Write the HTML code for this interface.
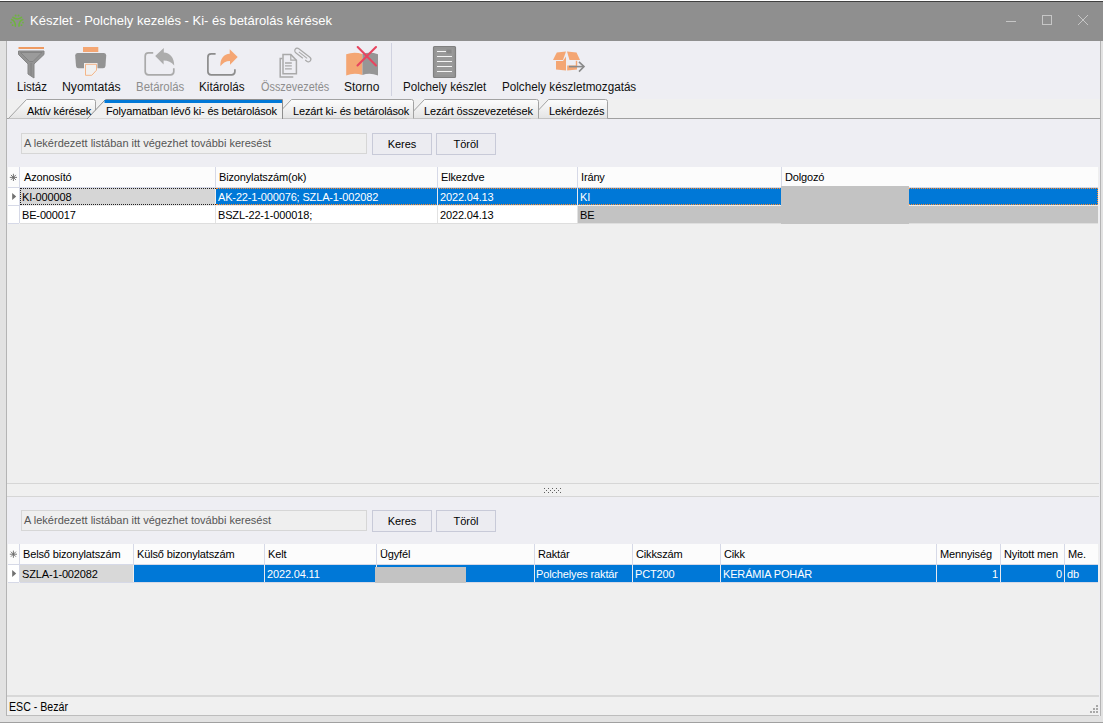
<!DOCTYPE html>
<html><head><meta charset="utf-8">
<style>
*{margin:0;padding:0;box-sizing:border-box}
html,body{width:1103px;height:727px;overflow:hidden;background:#fff;font-family:"Liberation Sans",sans-serif;color:#000}
.a{position:absolute}
.t{position:absolute;white-space:nowrap}
#title{left:0;top:1px;width:1103px;height:40px;background:#8f8f8f;border-top:1px solid #404040}
#frame{left:0;top:41px;width:1103px;height:682px;background:#e2e2e2;border-bottom:1px solid #a0a0a0}
#inner{left:6px;top:41px;width:1095px;height:675px;border-left:1px solid #b4b4b4;border-right:1px solid #b4b4b4;background:#eeeef3}
.tb{font-size:12px;line-height:14px;top:80px;color:#111}
.tb.dis{color:#8d8d8d}
.tab{font-size:11px;line-height:13px;top:105px;letter-spacing:-0.15px}
.g{font-size:11px;line-height:19px;letter-spacing:-0.15px}
.gh{font-size:11px;line-height:20px;letter-spacing:-0.15px}
</style></head><body>

<div id="title" class="a"></div>
<div class="t" style="left:30px;top:13px;font-size:13px;line-height:15px;color:#fff">Készlet - Polchely kezelés - Ki- és betárolás kérések</div>

<div id="frame" class="a"></div>
<div id="inner" class="a"></div>

<!-- toolbar -->
<div class="a" style="left:7px;top:41px;width:1093px;height:58px;background:#eeeef3"></div>
<div class="a" style="left:391px;top:43px;width:1px;height:53px;background:#d0d2e0"></div>

<div class="t tb" style="left:16.6px"><span style="display:inline-block;transform:scaleX(0.957);transform-origin:0 0">Listáz</span></div>
<div class="t tb" style="left:61.7px"><span style="display:inline-block;transform:scaleX(1.024);transform-origin:0 0">Nyomtatás</span></div>
<div class="t tb dis" style="left:136.0px"><span style="display:inline-block;transform:scaleX(0.953);transform-origin:0 0">Betárolás</span></div>
<div class="t tb" style="left:199.4px"><span style="display:inline-block;transform:scaleX(0.977);transform-origin:0 0">Kitárolás</span></div>
<div class="t tb dis" style="left:260.8px"><span style="display:inline-block;transform:scaleX(0.905);transform-origin:0 0">Összevezetés</span></div>
<div class="t tb" style="left:344.2px"><span style="display:inline-block;transform:scaleX(1.001);transform-origin:0 0">Storno</span></div>
<div class="t tb" style="left:402.8px"><span style="display:inline-block;transform:scaleX(0.968);transform-origin:0 0">Polchely készlet</span></div>
<div class="t tb" style="left:501.9px"><span style="display:inline-block;transform:scaleX(0.972);transform-origin:0 0">Polchely készletmozgatás</span></div>

<!-- tab strip -->
<div class="a" style="left:7px;top:99px;width:1093px;height:20px;background:#f0f0f0"></div>
<div class="a" style="left:7px;top:118px;width:1093px;height:1px;background:#a0a0a0"></div>


<!-- tabs -->
<svg class="a" style="left:0;top:0" width="700" height="125" viewBox="0 0 700 125">
<defs><linearGradient id="tg" x1="0" y1="0" x2="0" y2="1"><stop offset="0" stop-color="#fdfdfd"/><stop offset="1" stop-color="#e4e4e4"/></linearGradient></defs>
<path d="M530.5,118.5 L548.5,99.5 H605.5 Q607.5,99.5 607.5,101.5 V118.5" fill="url(#tg)" stroke="#a2a2a2" stroke-width="1"/>
<path d="M406.5,118.5 L424.5,99.5 H536.5 Q538.5,99.5 538.5,101.5 V118.5" fill="url(#tg)" stroke="#a2a2a2" stroke-width="1"/>
<path d="M273.5,118.5 L291.5,99.5 H411.5 Q413.5,99.5 413.5,101.5 V118.5" fill="url(#tg)" stroke="#a2a2a2" stroke-width="1"/>
<path d="M8.5,118.5 L26.5,99.5 H93.5 Q95.5,99.5 95.5,101.5 V118.5" fill="url(#tg)" stroke="#a2a2a2" stroke-width="1"/>
<path d="M87,119 L105.5,99.5 H282.5 V119 Z" fill="#f0f0f0"/>
<path d="M87,119 L105.5,99.5 H282.5 V119" fill="none" stroke="#8e8e8e" stroke-width="1"/>
<path d="M104.5,101.5 H282" stroke="#0078d7" stroke-width="3"/>
<path d="M88,118.5 H282" stroke="#dadada" stroke-width="1"/>
</svg>
<div class="t tab" style="left:27px">Aktív kérések</div>
<div class="t tab" style="left:106px">Folyamatban lévő ki- és betárolások</div>
<div class="t tab" style="left:293px">Lezárt ki- és betárolások</div>
<div class="t tab" style="left:424px">Lezárt összevezetések</div>
<div class="t tab" style="left:549px">Lekérdezés</div>

<!-- top panel -->
<div class="a" style="left:7px;top:119px;width:1092px;height:364px;background:#eeeef3"></div>
<div class="a" style="left:21px;top:133px;width:346px;height:21px;background:#efefef;border:1px solid #d6d6d6"></div>
<div class="t" style="left:24px;top:137px;font-size:11px;line-height:13px;color:#555">A lekérdezett listában itt végezhet további keresést</div>
<div class="a" style="left:372px;top:133px;width:60px;height:22px;border:1px solid #c8cad8;background:#ececf1"></div>
<div class="t" style="left:372px;top:138px;width:60px;text-align:center;font-size:11px;line-height:13px">Keres</div>
<div class="a" style="left:436px;top:133px;width:60px;height:22px;border:1px solid #c8cad8;background:#ececf1"></div>
<div class="t" style="left:436px;top:138px;width:60px;text-align:center;font-size:11px;line-height:13px">Töröl</div>

<!-- grid 1 -->
<div class="a" style="left:7px;top:167px;width:1092px;height:316px;background:#efefef"></div>

<div class="a" style="left:8px;top:167px;width:1090px;height:20px;background:#fcfcfc"></div>
<div class="a" style="left:8px;top:187px;width:1090px;height:1px;background:#d6d9e7"></div>
<div class="a" style="left:19px;top:167px;width:1px;height:20px;background:#d6d9e7"></div>
<div class="a" style="left:215px;top:167px;width:1px;height:20px;background:#d6d9e7"></div>
<div class="a" style="left:437px;top:167px;width:1px;height:20px;background:#d6d9e7"></div>
<div class="a" style="left:577px;top:167px;width:1px;height:20px;background:#d6d9e7"></div>
<div class="a" style="left:781px;top:167px;width:1px;height:20px;background:#d6d9e7"></div>
<div class="a" style="left:8px;top:188px;width:11px;height:35px;background:#fff"></div>
<div class="a" style="left:19px;top:188px;width:1px;height:35px;background:#d6d9e7"></div>
<div class="a" style="left:8px;top:205px;width:11px;height:1px;background:#d6d9e7"></div>
<div class="a" style="left:8px;top:223px;width:11px;height:1px;background:#d6d9e7"></div>
<div class="a" style="left:20px;top:188px;width:195px;height:17px;background:#d6d6d6"></div>
<div class="a" style="left:216px;top:188px;width:882px;height:17px;background:#0078d7"></div>
<div class="a" style="left:20px;top:188px;width:196px;height:17px;border:1px dotted #222;border-right:none"></div>
<div class="a" style="left:216px;top:188px;width:882px;height:17px;border:1px dotted #ff8a2a;border-left:none"></div>
<div class="a" style="left:437px;top:188px;width:1px;height:17px;background:#e9e9ee"></div>
<div class="a" style="left:577px;top:188px;width:1px;height:17px;background:#e9e9ee"></div>
<div class="a" style="left:781px;top:188px;width:1px;height:17px;background:#e9e9ee"></div>
<div class="a" style="left:20px;top:205px;width:1078px;height:1px;background:#ececec"></div>
<div class="a" style="left:20px;top:206px;width:558px;height:17px;background:#fff"></div>
<div class="a" style="left:578px;top:206px;width:520px;height:17px;background:#c3c3c3"></div>
<div class="a" style="left:215px;top:206px;width:1px;height:17px;background:#e2e2e2"></div>
<div class="a" style="left:437px;top:206px;width:1px;height:17px;background:#e2e2e2"></div>
<div class="a" style="left:577px;top:206px;width:1px;height:17px;background:#e2e2e2"></div>
<div class="a" style="left:20px;top:223px;width:1078px;height:1px;background:#dedede"></div>
<div class="a" style="left:781px;top:186px;width:128px;height:38px;background:#c3c3c3"></div>
<div class="t gh" style="left:24px;top:167px">Azonosító</div>
<div class="t gh" style="left:219px;top:167px">Bizonylatszám(ok)</div>
<div class="t gh" style="left:441px;top:167px">Elkezdve</div>
<div class="t gh" style="left:581px;top:167px">Irány</div>
<div class="t gh" style="left:785px;top:167px">Dolgozó</div>
<div class="t g" style="left:22px;top:188px;color:#000">KI-000008</div>
<div class="t g" style="left:218px;top:188px;color:#fff">AK-22-1-000076; SZLA-1-002082</div>
<div class="t g" style="left:440px;top:188px;color:#fff">2022.04.13</div>
<div class="t g" style="left:580px;top:188px;color:#fff">KI</div>
<div class="t g" style="left:22px;top:206px">BE-000017</div>
<div class="t g" style="left:218px;top:206px">BSZL-22-1-000018;</div>
<div class="t g" style="left:440px;top:206px">2022.04.13</div>
<div class="t g" style="left:580px;top:206px">BE</div>
<!-- splitter -->
<div class="a" style="left:7px;top:483px;width:1092px;height:1px;background:#d6d6d6"></div>
<div class="a" style="left:7px;top:484px;width:1092px;height:12px;background:#f0f0f0"></div>
<div class="a" style="left:7px;top:496px;width:1092px;height:1px;background:#d6d6d6"></div>

<!-- bottom panel -->
<div class="a" style="left:7px;top:497px;width:1092px;height:47px;background:#eeeef3"></div>
<div class="a" style="left:21px;top:510px;width:346px;height:21px;background:#efefef;border:1px solid #d6d6d6"></div>
<div class="t" style="left:24px;top:514px;font-size:11px;line-height:13px;color:#555">A lekérdezett listában itt végezhet további keresést</div>
<div class="a" style="left:372px;top:510px;width:60px;height:22px;border:1px solid #c8cad8;background:#ececf1"></div>
<div class="t" style="left:372px;top:515px;width:60px;text-align:center;font-size:11px;line-height:13px">Keres</div>
<div class="a" style="left:436px;top:510px;width:60px;height:22px;border:1px solid #c8cad8;background:#ececf1"></div>
<div class="t" style="left:436px;top:515px;width:60px;text-align:center;font-size:11px;line-height:13px">Töröl</div>

<div class="a" style="left:7px;top:544px;width:1092px;height:151px;background:#efefef"></div>

<div class="a" style="left:8px;top:544px;width:1090px;height:20px;background:#fcfcfc"></div>
<div class="a" style="left:8px;top:564px;width:1090px;height:1px;background:#d6d9e7"></div>
<div class="a" style="left:19px;top:544px;width:1px;height:20px;background:#d6d9e7"></div>
<div class="a" style="left:133px;top:544px;width:1px;height:20px;background:#d6d9e7"></div>
<div class="a" style="left:264px;top:544px;width:1px;height:20px;background:#d6d9e7"></div>
<div class="a" style="left:376px;top:544px;width:1px;height:20px;background:#d6d9e7"></div>
<div class="a" style="left:534px;top:544px;width:1px;height:20px;background:#d6d9e7"></div>
<div class="a" style="left:632px;top:544px;width:1px;height:20px;background:#d6d9e7"></div>
<div class="a" style="left:720px;top:544px;width:1px;height:20px;background:#d6d9e7"></div>
<div class="a" style="left:936px;top:544px;width:1px;height:20px;background:#d6d9e7"></div>
<div class="a" style="left:1000px;top:544px;width:1px;height:20px;background:#d6d9e7"></div>
<div class="a" style="left:1064px;top:544px;width:1px;height:20px;background:#d6d9e7"></div>
<div class="a" style="left:8px;top:565px;width:11px;height:17px;background:#fff"></div>
<div class="a" style="left:19px;top:565px;width:1px;height:17px;background:#d6d9e7"></div>
<div class="a" style="left:8px;top:582px;width:11px;height:1px;background:#d6d9e7"></div>
<div class="a" style="left:20px;top:565px;width:113px;height:17px;background:#d8d8d8"></div>
<div class="a" style="left:134px;top:565px;width:964px;height:17px;background:#0078d7"></div>
<div class="a" style="left:264px;top:565px;width:1px;height:17px;background:#e9e9ee"></div>
<div class="a" style="left:376px;top:565px;width:1px;height:17px;background:#e9e9ee"></div>
<div class="a" style="left:534px;top:565px;width:1px;height:17px;background:#e9e9ee"></div>
<div class="a" style="left:632px;top:565px;width:1px;height:17px;background:#e9e9ee"></div>
<div class="a" style="left:720px;top:565px;width:1px;height:17px;background:#e9e9ee"></div>
<div class="a" style="left:936px;top:565px;width:1px;height:17px;background:#e9e9ee"></div>
<div class="a" style="left:1000px;top:565px;width:1px;height:17px;background:#e9e9ee"></div>
<div class="a" style="left:1064px;top:565px;width:1px;height:17px;background:#e9e9ee"></div>
<div class="a" style="left:20px;top:582px;width:1078px;height:1px;background:#d6d9e7"></div>
<div class="a" style="left:375px;top:567px;width:91px;height:16px;background:#c3c3c3"></div>
<div class="t gh" style="left:23px;top:544px">Belső bizonylatszám</div>
<div class="t gh" style="left:137px;top:544px">Külső bizonylatszám</div>
<div class="t gh" style="left:268px;top:544px">Kelt</div>
<div class="t gh" style="left:380px;top:544px">Ügyfél</div>
<div class="t gh" style="left:538px;top:544px">Raktár</div>
<div class="t gh" style="left:636px;top:544px">Cikkszám</div>
<div class="t gh" style="left:724px;top:544px">Cikk</div>
<div class="t gh" style="left:940px;top:544px">Mennyiség</div>
<div class="t gh" style="left:1004px;top:544px">Nyitott men</div>
<div class="t gh" style="left:1068px;top:544px">Me.</div>
<div class="t g" style="left:22px;top:565px">SZLA-1-002082</div>
<div class="t g" style="left:267px;top:565px;color:#fff">2022.04.11</div>
<div class="t g" style="left:536px;top:565px;color:#fff">Polchelyes raktár</div>
<div class="t g" style="left:635px;top:565px;color:#fff">PCT200</div>
<div class="t g" style="left:723px;top:565px;color:#fff">KERÁMIA POHÁR</div>
<div class="t g" style="left:1067px;top:565px;color:#fff">db</div>
<div class="t g" style="left:900px;top:565px;width:98px;text-align:right;color:#fff">1</div>
<div class="t g" style="left:960px;top:565px;width:102px;text-align:right;color:#fff">0</div>

<svg class="a" style="left:0;top:0" width="30" height="600" viewBox="0 0 30 600">
<g stroke="#666" stroke-width="0.9"><path d="M13.4,173.8 V181 M9.8,177.4 H17 M10.9,174.9 L15.9,179.9 M15.9,174.9 L10.9,179.9"/></g>
<path d="M12.2,193 L16.2,196.5 L12.2,200 Z" fill="#707070"/>
<g stroke="#666" stroke-width="0.9"><path d="M13.4,550.6 V557.8 M9.8,554.2 H17 M10.9,551.7 L15.9,556.7 M15.9,551.7 L10.9,556.7"/></g>
<path d="M12.2,570 L16.2,573.5 L12.2,577 Z" fill="#707070"/>
</svg>
<svg class="a" style="left:540px;top:485px" width="24" height="10" viewBox="540 485 24 10">
<g fill="#606060">
<rect x="544" y="488" width="1" height="1"/><rect x="548" y="488" width="1" height="1"/><rect x="552" y="488" width="1" height="1"/><rect x="556" y="488" width="1" height="1"/><rect x="560" y="488" width="1" height="1"/>
<rect x="546" y="490" width="1" height="1"/><rect x="550" y="490" width="1" height="1"/><rect x="554" y="490" width="1" height="1"/><rect x="558" y="490" width="1" height="1"/>
<rect x="544" y="492" width="1" height="1"/><rect x="548" y="492" width="1" height="1"/><rect x="552" y="492" width="1" height="1"/><rect x="556" y="492" width="1" height="1"/><rect x="560" y="492" width="1" height="1"/>
</g></svg>

<!-- status bar -->
<div class="a" style="left:7px;top:695px;width:1092px;height:2px;background:#d8d8d8"></div>
<div class="a" style="left:7px;top:697px;width:1092px;height:19px;background:#f0f0f0;border-bottom:1px solid #bdbdbd"></div>
<div class="t" style="left:9px;top:700px;font-size:12px;line-height:14px"><span style="display:inline-block;transform:scaleX(0.885);transform-origin:0 0">ESC - Bezár</span></div>


<svg class="a" style="left:0;top:0" width="1103" height="727" viewBox="0 0 1103 727">
<!-- title logo -->
<g fill="none" stroke="#6fb43f" stroke-width="1.5" stroke-linecap="round">
<path d="M13,17.3 Q17,20.5 21.5,17.3"/>
<path d="M11.6,19.5 Q15.5,21 15.4,26.3"/>
<path d="M22.8,19.5 Q18.9,21 19,26.3"/>
</g>
<g fill="#6fb43f">
<circle cx="15.6" cy="15.5" r="1"/><circle cx="18.5" cy="15.5" r="1"/>
<circle cx="11" cy="22.6" r="0.9"/><circle cx="12.6" cy="25.2" r="0.9"/>
<circle cx="23" cy="22.6" r="0.9"/><circle cx="21.5" cy="25.2" r="0.9"/>
</g>
<!-- window controls -->
<g stroke="#c6c6c6" stroke-width="1" fill="none">
<path d="M1006,21.5 H1016"/>
<rect x="1042.5" y="15.5" width="9" height="9"/>
<path d="M1078,15 L1088,25 M1088,15 L1078,25"/>
</g>
<!-- Listaz funnel -->
<rect x="18.5" y="47" width="25.5" height="2" fill="#ee9a62"/>
<path d="M18.5,51 H44 V54.5 L34,64 V78 L28,74 V64 L18.5,54.5 Z" fill="#939393" stroke="#858585" stroke-width="1"/>
<path d="M20.5,52.5 H42 L33,61.5 H29.5 Z" fill="#9b9b9b" stroke="#828282" stroke-width="0.9"/><path d="M31,63 V75.5" stroke="#828282" stroke-width="0.9"/>
<!-- Nyomtatas printer -->
<rect x="83" y="47" width="15.3" height="5" fill="#f4a673"/>
<path d="M77.5,53 H104 Q106.2,53 106.2,55.5 L105.5,66 Q105.3,68.3 103,68.3 H78.5 Q76.2,68.3 76,66 L75.2,55.5 Q75.2,53 77.5,53 Z" fill="#939393"/>
<path d="M84,63 H97.5 V71 L92.5,76.5 H84 Z" fill="#f0f0f0"/>
<path d="M85.5,64.3 H96.5 V70.2 L91.8,75.3 H85.5 Z" fill="#f0f0f0" stroke="#f4b489" stroke-width="1"/>
<!-- Betarolas (disabled) -->
<path d="M153.2,52.8 H148.5 Q145.2,52.8 145.2,56 V71.5 Q145.2,74.8 148.5,74.8 H170.5 Q173.8,74.8 173.8,71.5 V68.3" fill="none" stroke="#aaaaaa" stroke-width="1.7"/>
<path d="M155.2,56 L163.8,48 V52.4 C170,52.8 174.3,57.5 174.2,65.5 C171.5,62.2 168,60.6 163.6,60.6 V64.4 Z" fill="#acacac"/>
<!-- Kitarolas -->
<path d="M215.6,53.9 H211.2 Q207.9,53.9 207.9,57.2 V71.6 Q207.9,74.9 211.2,74.9 H231.6 Q234.9,74.9 234.9,71.6 V69.2" fill="none" stroke="#8c8c8c" stroke-width="1.7"/>
<path d="M237.7,57 L229.7,49.2 V53.8 C224,54 220,58.5 220.4,66.3 C223,62.6 226,61 230,61 V64.8 Z" fill="#f5a673"/>
<!-- Osszevezetes -->
<g fill="none" stroke="#a9a9a9" stroke-width="1.5">
<path d="M282.4,58.4 H280.2 V76.9 H293.3"/>
<path d="M283,54.6 H290.8 L296.4,60.2 V73.7 H283 Z"/>
<path d="M290.8,54.6 V60.2 H296.4" stroke-width="1.2"/>
<path d="M285,63 H291.8 M285,65.9 H291.8 M285,68.8 H291.8" stroke-width="1.3"/>
<g transform="translate(302.8,55) rotate(38) translate(-10,-3)"><path d="M12,5.5 H3 A2.5,2.5 0 0 1 3,0.5 H17 A2.5,2.5 0 0 1 17,5.5 H15" stroke-width="1.2"/><path d="M5,3 H15.5" stroke-width="1.1"/></g>
</g>
<!-- Storno -->
<path d="M346.2,54.3 Q354,51.3 362.4,54 V75 Q354,72.5 346.2,75.5 Z" fill="#f4a673"/>
<path d="M362.4,54 Q370,51.5 378,54.3 V75.5 Q370,72.5 362.4,75 Z" fill="#969696"/>
<path d="M357.7,47 L376,65.5 M376,47 L357.5,65.5" stroke="#e8455f" stroke-width="2.1" stroke-linecap="round"/>
<!-- Polchely keszlet doc -->
<rect x="433.5" y="46.5" width="22" height="31" rx="1" fill="#959595" stroke="#808080" stroke-width="1.2"/>
<rect x="436" y="49" width="17" height="26" fill="#999"/>
<g stroke="#f4f4f4" stroke-width="1.1">
<path d="M437,51.5 H446 M437,56.5 H452 M437,61.5 H452 M437,66.5 H452 M437,71.5 H452"/>
</g>
<rect x="446.5" y="49.5" width="5" height="4" fill="#888"/>
<!-- Polchely keszletmozgatas box -->
<path d="M553,60 L556.8,52.6 L566,51.6 L563,60 Z" fill="#f4a673"/>
<path d="M567,51.6 L576.5,52.6 L580,60 L569.5,60 Z" fill="#f4a673"/>
<path d="M556,61 H563 L566,56.5 V70.5 L556,69.5 Z" fill="#f4a673"/>
<path d="M567.2,56.5 L570,61 V61 H567.2 Z" fill="#f4a673" opacity="0"/>
<path d="M567.2,70.5 L577,69.5 V65.6 H567.2 Z" fill="#f4a673"/>
<path d="M575.8,60.8 H577.2 V66 H575.8 Z" fill="#f4a673"/>
<g stroke="#8a8a8a" stroke-width="1.6" fill="none">
<path d="M569,66.6 H583.5"/>
<path d="M579,61.8 L584,66.6 L579,71.6"/>
</g>
<!-- toolbar separator -->
</svg>
<svg class="a" style="left:1085px;top:700px" width="18" height="18" viewBox="1085 700 18 18"><g fill="#a8a8a8">
<rect x="1096" y="705" width="2" height="2"/><rect x="1093" y="708" width="2" height="2"/><rect x="1096" y="708" width="2" height="2"/>
<rect x="1090" y="711" width="2" height="2"/><rect x="1093" y="711" width="2" height="2"/><rect x="1096" y="711" width="2" height="2"/></g></svg>
</body></html>
